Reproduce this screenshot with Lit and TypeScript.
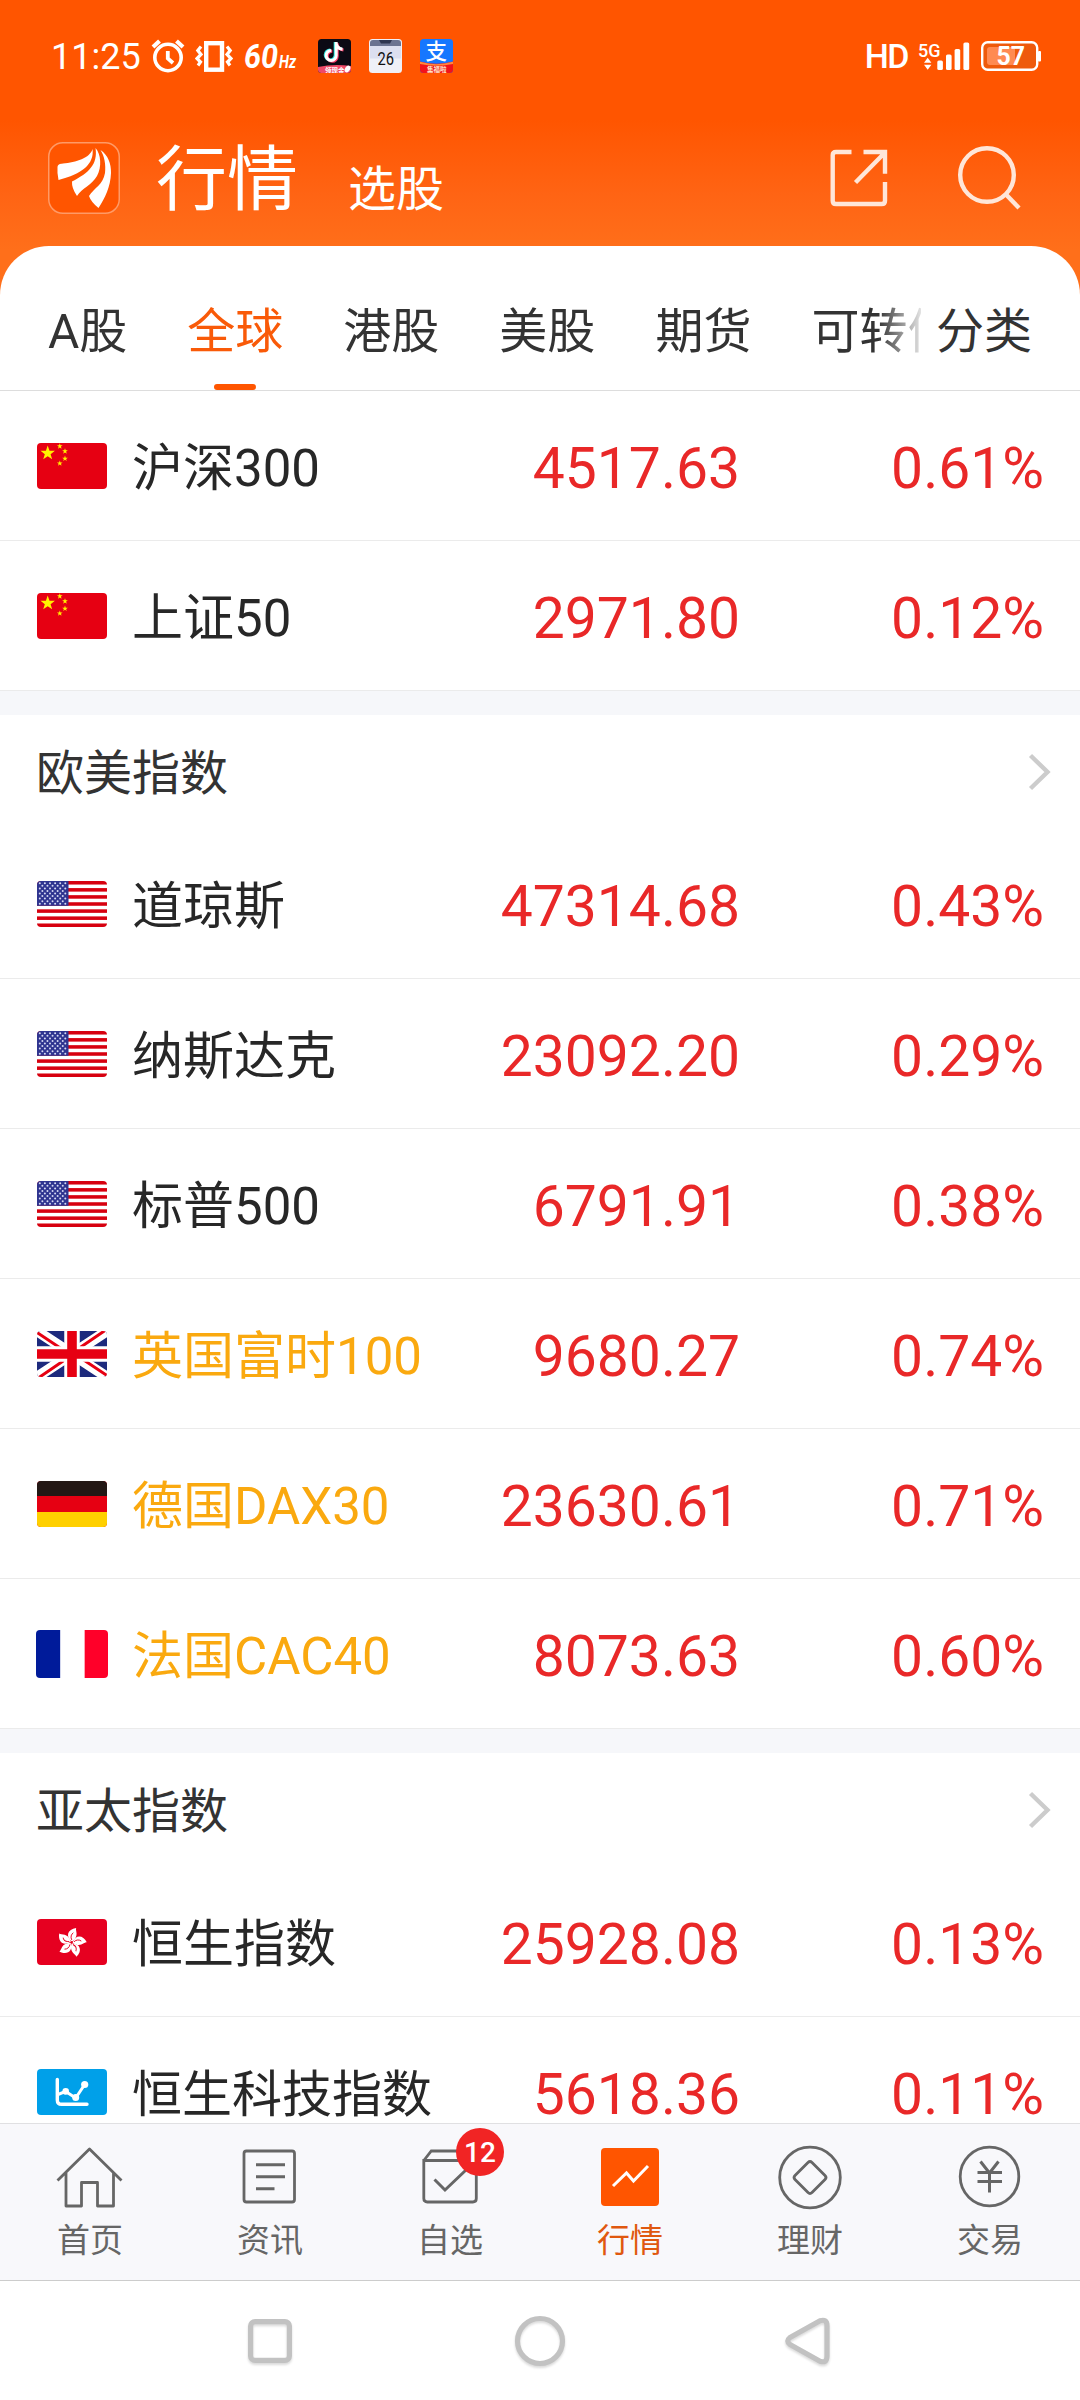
import { LitElement, html, svg, css, nothing, TemplateResult } from "lit";
import { customElement, property } from "lit/decorators.js";
import { classMap } from "lit/directives/class-map.js";

type FlagName = "cn" | "us" | "gb" | "de" | "fr" | "hk" | "chart";
interface Quote {
  flag: FlagName;
  name: string;
  price: string;
  change: string;
  delayed?: boolean;
  compact?: boolean;
}
interface Section {
  title?: string;
  quotes: Quote[];
}

const star = (cx: number, cy: number, r: number) => {
  const pts: string[] = [];
  for (let i = 0; i < 10; i++) {
    const a = (Math.PI / 5) * i - Math.PI / 2;
    const k = i % 2 ? r * 0.4 : r;
    pts.push(`${(cx + k * Math.cos(a)).toFixed(2)},${(cy + k * Math.sin(a)).toFixed(2)}`);
  }
  return svg`<polygon points=${pts.join(" ")} fill="#fff100"/>`;
};

const cantonStars = () => {
  const out: TemplateResult[] = [];
  for (let r = 0; r < 9; r++) {
    for (let c = 0; c < (r % 2 ? 5 : 6); c++) {
      out.push(svg`<circle cx=${2.8 + c * 5.1 + (r % 2 ? 2.55 : 0)} cy=${2.3 + r * 2.55} r="1" fill="#d5d8f2"/>` as TemplateResult);
    }
  }
  return out;
};

const flags: Record<FlagName, () => unknown> = {
  cn: () => svg`<rect width="70" height="46" fill="#e60012"/>
    ${star(10.7, 10.2, 7.6)}${star(22.8, 3.2, 3)}${star(28, 8.2, 3)}${star(28, 15.6, 3)}${star(22.8, 20.4, 3)}`,
  us: () => svg`<rect width="70" height="46" fill="#fff"/>
    ${[0, 1, 2, 3, 4, 5, 6].map((i) => svg`<rect y=${i * 7.08} width="70" height="3.54" fill="#d7000f"/>`)}
    <rect width="31.5" height="24.8" fill="#2f3590"/>${cantonStars()}`,
  gb: () => svg`<rect width="70" height="46" fill="#1d2a7d"/>
    <path d="M0 0L70 46M70 0L0 46" stroke="#fff" stroke-width="10.5"/>
    <path d="M0 1.5L30 21.5M70 44.5L40 24.5M68 -.5L38 20M2 46.5L32 26" stroke="#e60012" stroke-width="3"/>
    <path d="M35 0V46M0 23H70" stroke="#fff" stroke-width="15.5"/>
    <path d="M35 0V46M0 23H70" stroke="#e60012" stroke-width="9.6"/>`,
  de: () => svg`<rect width="70" height="46" fill="#e60012"/><rect width="70" height="15" fill="#231815"/>
    <rect y="31" width="70" height="15" fill="#ffd000"/>`,
  fr: () => svg`<rect width="70" height="46" fill="#fff"/><rect width="23.5" height="46" fill="#001b9a"/>
    <rect x="47.3" width="22.7" height="46" fill="#ff0029"/>`,
  hk: () => svg`<rect width="70" height="46" fill="#e60020"/>
    <g transform="translate(34.6 23.4) rotate(8)">${[0, 72, 144, 216, 288].map(
      (a) => svg`<g transform="rotate(${a})"><path d="M0 -1.2C-7 -5 -6 -12.500 2.5 -15C1.8 -12 7 -8 .8 -1.200Z" fill="#fff"/>
      <path d="M-.2 -2.5C-2 -5 -1.6 -8 .4 -9.8" fill="none" stroke="#e60020" stroke-width=".9"/></g>`,
    )}</g>`,
  chart: () => svg`<rect width="70" height="46" fill="#00a0e9"/>
    <g fill="none" stroke="#fff" stroke-linecap="round" stroke-linejoin="round">
      <path d="M20.3 10.5V31Q20.3 35.3 24.6 35.3H50" stroke-width="3.4"/>
      <path d="M21 25.5L28.7 22.4L38.7 29L47.7 15.5" stroke-width="3"/></g>
    <g fill="#fff"><circle cx="28.7" cy="22.4" r="3.3"/><circle cx="38.7" cy="28.6" r="3.5"/><circle cx="47.7" cy="15.5" r="3.6"/></g>`,
};

@customElement("quote-row")
class QuoteRow extends LitElement {
  @property({ attribute: false }) quote!: Quote;
  static styles = css`
    :host { display: block; height: 150px; flex: none; box-sizing: border-box; border-bottom: 1px solid #ebebeb; background: #fff; }
    .row { display: grid; grid-template-columns: 70px 1fr 290px 304px; align-items: center; height: 149px; padding: 0 36px 0 37px; }
    .flag { display: block; width: 70px; height: 46px; border-radius: 4px; }
    .flag.large { width: 72px; height: 48px; margin-left: -1px; }
    .name { padding: 6px 0 0 25px; font-size: 51px; line-height: 60px; color: #272727; white-space: nowrap; }
    .name.delayed { color: #faa90f; }
    .name.compact { font-size: 50px; }
    .num { padding-top: 6px; font-size: 57px; line-height: 60px; color: #e92828; text-align: right; }
  `;
  render() {
    const q = this.quote;
    return html`<div class="row">
      <svg class=${classMap({ flag: true, large: q.flag === "fr" })} viewBox="0 0 70 46" preserveAspectRatio="none">${flags[q.flag]()}</svg>
      <span class=${classMap({ name: true, delayed: !!q.delayed, compact: !!q.compact })}>${q.name}</span>
      <span class="num">${q.price}</span>
      <span class="num">${q.change}</span>
    </div>`;
  }
}

@customElement("status-bar")
class StatusBar extends LitElement {
  static styles = css`
    :host { display: flex; justify-content: space-between; height: 112px; box-sizing: border-box; padding: 36px 39px 0 51px; color: #fff; }
    .side { display: flex; align-items: center; height: 40px; }
    .time { font-size: 36px; line-height: 40px; width: 88px; margin-right: 12px; padding-top: 1px; }
    .hd { font-size: 34px; line-height: 40px; font-weight: 500; letter-spacing: -1.5px; margin-right: 10px; }
    svg { display: block; flex: none; }
    .alarm { margin-right: 10px; }
    .vibrate { margin-right: 11px; }
    .rate { margin-right: 21px; }
    .app { margin-right: 18px; }
    .signal { margin-right: 11px; }
  `;
  render() {
    return html`
      <div class="side">
        <span class="time">11:25</span>
        <svg class="alarm" width="34" height="36" viewBox="0 0 34 36" fill="none" stroke="#fff">
          <circle cx="17" cy="19.5" r="13.2" stroke-width="3.6"/>
          <path d="M2 9L8.5 3M32 9L25.5 3" stroke-width="4.2"/>
          <path d="M16.8 13V20.5L22 25" stroke-width="3.8"/>
        </svg>
        <svg class="vibrate" width="38" height="34" viewBox="0 0 38 34" fill="none" stroke="#fff">
          <rect x="11.2" y="4.2" width="15.8" height="26.5" stroke-width="4.4"/>
          <path d="M6 7.5L2.8 11.5L6 15.5L2 19.5L5.5 23L3 26.5M32 7.5L35.2 11.5L32 15.5L36 19.5L32.5 23L35 26.5" stroke-width="3.2"/>
        </svg>
        <svg class="rate" width="53" height="34" viewBox="0 0 53 34" fill="#fff" font-family="Roboto, sans-serif" font-weight="700" font-style="italic">
          <text x="0" y="29" font-size="34" textLength="34" lengthAdjust="spacingAndGlyphs">60</text>
          <text x="35" y="29" font-size="19" textLength="17" lengthAdjust="spacingAndGlyphs">Hz</text>
        </svg>
        <svg class="app" width="33" height="34" viewBox="0 0 33 34">
          <clipPath id="a"><rect width="33" height="34" rx="3.5"/></clipPath>
          <g clip-path="url(#a)"><rect width="33" height="34" fill="#0b0a14"/>
            <g fill="none" stroke-width="3">
              <path d="M18.2 3.5V16.5A5 5 0 1 1 13.3 11.500M18.2 4.5Q19 9.5 24.5 10.3" stroke="#35e6e0" transform="translate(-1 -.6)"/>
              <path d="M18.2 3.5V16.5A5 5 0 1 1 13.3 11.500M18.2 4.5Q19 9.5 24.5 10.3" stroke="#fb3f6c" transform="translate(1 .8)"/>
              <path d="M18.2 3V16.5A5 5 0 1 1 13.3 11.500M18.2 4.5Q19 9.5 24.5 10.3" stroke="#fff"/>
            </g>
            <path d="M0 28Q16 24.500 33 27V34H0Z" fill="#ee4a68"/>
            <text x="7" y="33.500" font-size="6.500" font-weight="700" fill="#fff" font-family="'Noto Sans CJK SC', sans-serif">领现金</text>
            <ellipse cx="29.500" cy="30" rx="2.400" ry="3.600" transform="rotate(35 29.500 30)" fill="#fff"/></g>
        </svg>
        <svg class="app" width="33" height="34" viewBox="0 0 33 34">
          <rect width="33" height="34" rx="3.500" fill="#eff0f7"/>
          <path d="M1 7V4Q1 1 4 1H29Q32 1 32 4V7Z" fill="#6b7391"/>
          <path d="M10 1H23L21 4.500H12Z" fill="#2e3550"/>
          <rect x="1" y="7" width="31" height="12.500" fill="#dcdff0"/>
          <text x="8.500" y="25.500" font-size="18.500" textLength="16.500" lengthAdjust="spacingAndGlyphs" fill="#111" font-family="Roboto, sans-serif">26</text>
        </svg>
        <svg width="33" height="34" viewBox="0 0 33 34">
          <clipPath id="b"><rect width="33" height="34" rx="3.500"/></clipPath>
          <g clip-path="url(#b)"><rect width="33" height="34" fill="#1677ff"/>
            <text x="5.500" y="20" font-size="21.500" font-weight="500" fill="#fff" font-family="'Noto Sans CJK SC', sans-serif">支</text>
            <path d="M0 22.500Q16 27 33 22.500V34H0Z" fill="#f2121b"/>
            <path d="M0 22.800Q16 27.500 33 22.800V25Q16 28.500 0 25Z" fill="#ff8a3c"/>
            <text x="7" y="32.800" font-size="6.500" font-weight="700" fill="#ffe9c9" font-family="'Noto Sans CJK SC', sans-serif">集福啦</text></g>
        </svg>
      </div>
      <div class="side">
        <span class="hd">HD</span>
        <svg class="signal" width="52" height="34" viewBox="0 0 52 34" fill="#fff">
          <text x="0" y="17.500" font-size="19" font-weight="500" textLength="22.500" lengthAdjust="spacingAndGlyphs" font-family="Roboto, sans-serif">5G</text>
          <path d="M6 23.800L9.700 18.800L13.400 23.800ZM6 25.800H13.400L9.700 30.800Z"/>
          <rect x="19.300" y="21.500" width="5.600" height="9.500" rx="1.600"/><rect x="28" y="15.500" width="5.600" height="15.500" rx="1.600"/>
          <rect x="36.600" y="10" width="5.600" height="21" rx="1.600"/><rect x="45.400" y="3.500" width="5.800" height="27.500" rx="1.600"/>
        </svg>
        <svg width="60" height="34" viewBox="0 0 60 34">
          <rect x="1.200" y="3.200" width="55" height="27.600" rx="5.500" fill="#ee5a0c" stroke="#fff" stroke-width="2.400"/>
          <rect x="57" y="12" width="3" height="10.500" rx="1" fill="#fff"/>
          <rect x="6" y="8" width="28" height="18" rx="3" fill="#ff8a52"/>
          <text x="15.500" y="26" font-size="26" font-weight="700" textLength="28.500" lengthAdjust="spacingAndGlyphs" fill="#fff" font-family="Roboto, sans-serif">57</text>
        </svg>
      </div>`;
  }
}

const navIcons = {
  home: svg`<path d="M6.500 36.500L38.500 5L70.500 36.500M15 29V62H30.500V38.500H46.500V62H62.500V29" stroke-width="2.800" stroke-linejoin="round"/>`,
  news: svg`<rect x="13" y="7" width="50.500" height="51" rx="2.500" stroke-width="2.800"/><path d="M25 20.800H54M25 32.800H54M25 44.800H43.500" stroke-width="3"/>`,
  picks: svg`<path d="M12.800 16.500L20.300 7H57.500L65.300 16.500V54.500Q65.300 58 61.800 58H16.300Q12.800 58 12.800 54.500V16.500H65.300" stroke-width="2.800"/><path d="M23.500 35.500L34 46L55 26" stroke-width="3"/>`,
  market: svg`<rect x="10" y="4" width="58" height="58" rx="4" fill="#f50" stroke="none"/><path d="M22 42L35.500 29L42.500 37L57 22" stroke="#fff" stroke-width="3"/>`,
  wealth: svg`<circle cx="39" cy="33.500" r="30.300" stroke-width="2.800"/><path d="M37 18.500Q39 16.500 41 18.500L54 31.500Q56 33.500 54 35.500L41 48.500Q39 50.500 37 48.500L24 35.500Q22 33.500 24 31.500Z" stroke-width="2.800"/>`,
  trade: svg`<circle cx="38.500" cy="32.500" r="29.300" stroke-width="2.800"/><path d="M29.500 17.500L38.500 29L47.500 17.500M38.500 29V48.500M26.500 28.500H51M26.500 37.500H51" stroke-width="3"/>`,
};

@customElement("app-root")
class AppRoot extends LitElement {
  static styles = css`
    :host { display: flex; flex-direction: column; width: 1080px; height: 2400px; overflow: hidden; background: #fff;
      font-family: Roboto, "Noto Sans CJK SC", sans-serif; }
    .header { flex: none; height: 296px; box-sizing: border-box; background: linear-gradient(#f50 0, #f50 120px, #ff6414 195px, #ff6f1a 250px, #ff6f1a 100%); color: #fff; }
    .toolbar { display: flex; align-items: flex-start; padding: 0 59px 0 48px; height: 134px; box-sizing: border-box; }
    .logo { display: block; margin: 30px 36px 0 0; }
    .titles { display: flex; align-items: baseline; gap: 50px; flex: 1; padding-top: 22px; line-height: 92px; }
    .title { font-size: 71px; }
    .subtitle { font-size: 48px; padding-top: 2px; transform: translateY(2px); }
    .share { display: block; margin: 35px 68px 0 0; }
    .search { display: block; margin-top: 34px; }
    .tabs { flex: none; display: flex; margin-top: -50px; height: 145px; box-sizing: border-box; background: #fff; border-bottom: 1px solid #ddd; border-radius: 49px 49px 0 0; padding-left: 48px; color: #333; font-size: 48px; line-height: 60px; white-space: nowrap; }
    .strip { display: flex; gap: 60px; width: 873px; overflow: hidden; height: 144px;
      mask-image: linear-gradient(90deg, #000 830px, transparent 880px); -webkit-mask-image: linear-gradient(90deg, #000 830px, transparent 880px); }
    .tab { display: flex; flex-direction: column; justify-content: space-between; align-items: center; padding-top: 56px; flex: none; }
    .tab.active { color: #f95a08; }
    .bar { width: 42px; height: 6px; border-radius: 3px; background: #f50; }
    .category { padding: 56px 0 0 15px; }
    .list { flex: 1; min-height: 0; overflow: hidden; display: flex; flex-direction: column; }
    .band { flex: none; height: 24px; background: #f6f7fa; }
    .section { flex: none; display: flex; align-items: center; justify-content: space-between; height: 114px; box-sizing: border-box; padding: 0 28px 0 36px; color: #333; font-size: 48px; line-height: 60px; }
    .section-title { padding-top: 3px; }
    .nav { flex: none; display: grid; grid-template-columns: repeat(6, 1fr); height: 158px; box-sizing: border-box; background: #f8f8fb; border-top: 1px solid #e0e0e2; border-bottom: 1px solid #ccc; color: #666; }
    .item { position: relative; display: flex; flex-direction: column; align-items: center; padding-top: 20px; font-size: 33px; line-height: 40px; }
    .item.active { color: #e0580f; }
    .icon { display: block; width: 78px; height: 68px; margin-bottom: 9px; }
    .badge { position: absolute; left: 96px; top: 4px; width: 48px; height: 48px; border-radius: 24px; background: #f12424; color: #fff; font-size: 28px; line-height: 49px; font-weight: 500; text-align: center; }
    .system { flex: none; display: flex; justify-content: center; align-items: center; gap: 212px; height: 119px; background: #fff; }
    .key { display: block; width: 58px; height: 60px; filter: drop-shadow(0 2px 1px rgba(0, 0, 0, 0.14)); }
  `;

  private tabs = ["A股", "全球", "港股", "美股", "期货", "可转债"];

  private sections: Section[] = [
    {
      quotes: [
        { flag: "cn", name: "沪深300", price: "4517.63", change: "0.61%" },
        { flag: "cn", name: "上证50", price: "2971.80", change: "0.12%" },
      ],
    },
    {
      title: "欧美指数",
      quotes: [
        { flag: "us", name: "道琼斯", price: "47314.68", change: "0.43%" },
        { flag: "us", name: "纳斯达克", price: "23092.20", change: "0.29%" },
        { flag: "us", name: "标普500", price: "6791.91", change: "0.38%" },
        { flag: "gb", name: "英国富时100", price: "9680.27", change: "0.74%", delayed: true },
        { flag: "de", name: "德国DAX30", price: "23630.61", change: "0.71%", delayed: true },
        { flag: "fr", name: "法国CAC40", price: "8073.63", change: "0.60%", delayed: true },
      ],
    },
    {
      title: "亚太指数",
      quotes: [
        { flag: "hk", name: "恒生指数", price: "25928.08", change: "0.13%" },
        { flag: "chart", name: "恒生科技指数", price: "5618.36", change: "0.11%", compact: true },
      ],
    },
  ];

  private nav = [
    { icon: navIcons.home, label: "首页" },
    { icon: navIcons.news, label: "资讯" },
    { icon: navIcons.picks, label: "自选", badge: 12 },
    { icon: navIcons.market, label: "行情", active: true },
    { icon: navIcons.wealth, label: "理财" },
    { icon: navIcons.trade, label: "交易" },
  ];

  render() {
    return html`
      <div class="header">
        <status-bar></status-bar>
        <div class="toolbar">
          <svg class="logo" width="72" height="72" viewBox="0 0 72 72">
            <rect x=".75" y=".75" width="70.500" height="70.500" rx="14" fill="#f50" stroke="#ff9a66" stroke-width="1.500"/>
            <g fill="#fff">
              <path d="M9.500 25C10 22 12 22 15 21.500C28 20.500 42 16 44.500 7C46.500 22 34 32 10.500 38Q9 31 9.500 25Z"/>
              <path d="M47.500 6C50 22 41 31 24 39.500Q23.500 46 29 54C34 46 44 43 49 34C54 25 53 12 47.500 6Z"/>
              <path d="M52.500 8C60 13 63.300 22 63 31C62.500 45 57 56 50.500 66Q43 60 41 54C46 46 55 43 57 31C58 23 56.500 14 52.500 8Z"/>
            </g>
          </svg>
          <div class="titles"><span class="title">行情</span><span class="subtitle">选股</span></div>
          <svg class="share" width="60" height="62" viewBox="0 0 60 62" fill="none" stroke="#ffe6d8" stroke-width="4.400">
            <path d="M22.500 5H7Q3.700 5 3.700 8.300V53.700Q3.700 57 7 57H52.700Q56 57 56 53.700V35M34.500 5H56V26.700M55.500 6L26.500 35.500"/>
          </svg>
          <svg class="search" width="64" height="66" viewBox="0 0 64 66" fill="none" stroke="#ffe6d8" stroke-width="4.400">
            <circle cx="30" cy="29" r="26.800"/><path d="M48.500 48L62 62"/>
          </svg>
        </div>
      </div>
      <div class="tabs">
        <div class="strip">
          ${this.tabs.map((t, i) => html`<div class=${classMap({ tab: true, active: i === 1 })}><span>${t}</span>${i === 1 ? html`<span class="bar"></span>` : nothing}</div>`)}
        </div>
        <div class="category">分类</div>
      </div>
      <div class="list">
        ${this.sections.map(
          (s) => html`${s.title
            ? html`<div class="band"></div>
                <div class="section"><span class="section-title">${s.title}</span>
                  <svg width="24" height="40" viewBox="0 0 24 40" fill="none" stroke="#ccc" stroke-width="4.400"><path d="M2.500 3.500L19.500 20L2.500 36.500"/></svg></div>`
            : nothing}${s.quotes.map((q) => html`<quote-row .quote=${q}></quote-row>`)}`,
        )}
      </div>
      <div class="nav">
        ${this.nav.map(
          (n) => html`<div class=${classMap({ item: true, active: !!n.active })}>
            <svg class="icon" viewBox="0 0 78 68" fill="none" stroke="#666">${n.icon}</svg>
            <span>${n.label}</span>${n.badge ? html`<span class="badge">${n.badge}</span>` : nothing}
          </div>`,
        )}
      </div>
      <div class="system">
        <svg class="key" viewBox="0 0 58 60" fill="none" stroke="#c2c2c2" stroke-width="5.200"><rect x="9.600" y="10.600" width="38.800" height="38.800" rx="4.500"/></svg>
        <svg class="key" viewBox="0 0 58 60" fill="none" stroke="#c2c2c2" stroke-width="5.200"><circle cx="29" cy="30" r="22.500"/></svg>
        <svg class="key" viewBox="0 0 58 60" fill="none" stroke="#c2c2c2" stroke-width="5.200"><path d="M9 26.500L39 9.800Q46 7.500 46 15V45Q46 52.500 39 50.200L9 33.500Q4.500 30 9 26.500Z" stroke-linejoin="round"/></svg>
      </div>`;
  }
}
